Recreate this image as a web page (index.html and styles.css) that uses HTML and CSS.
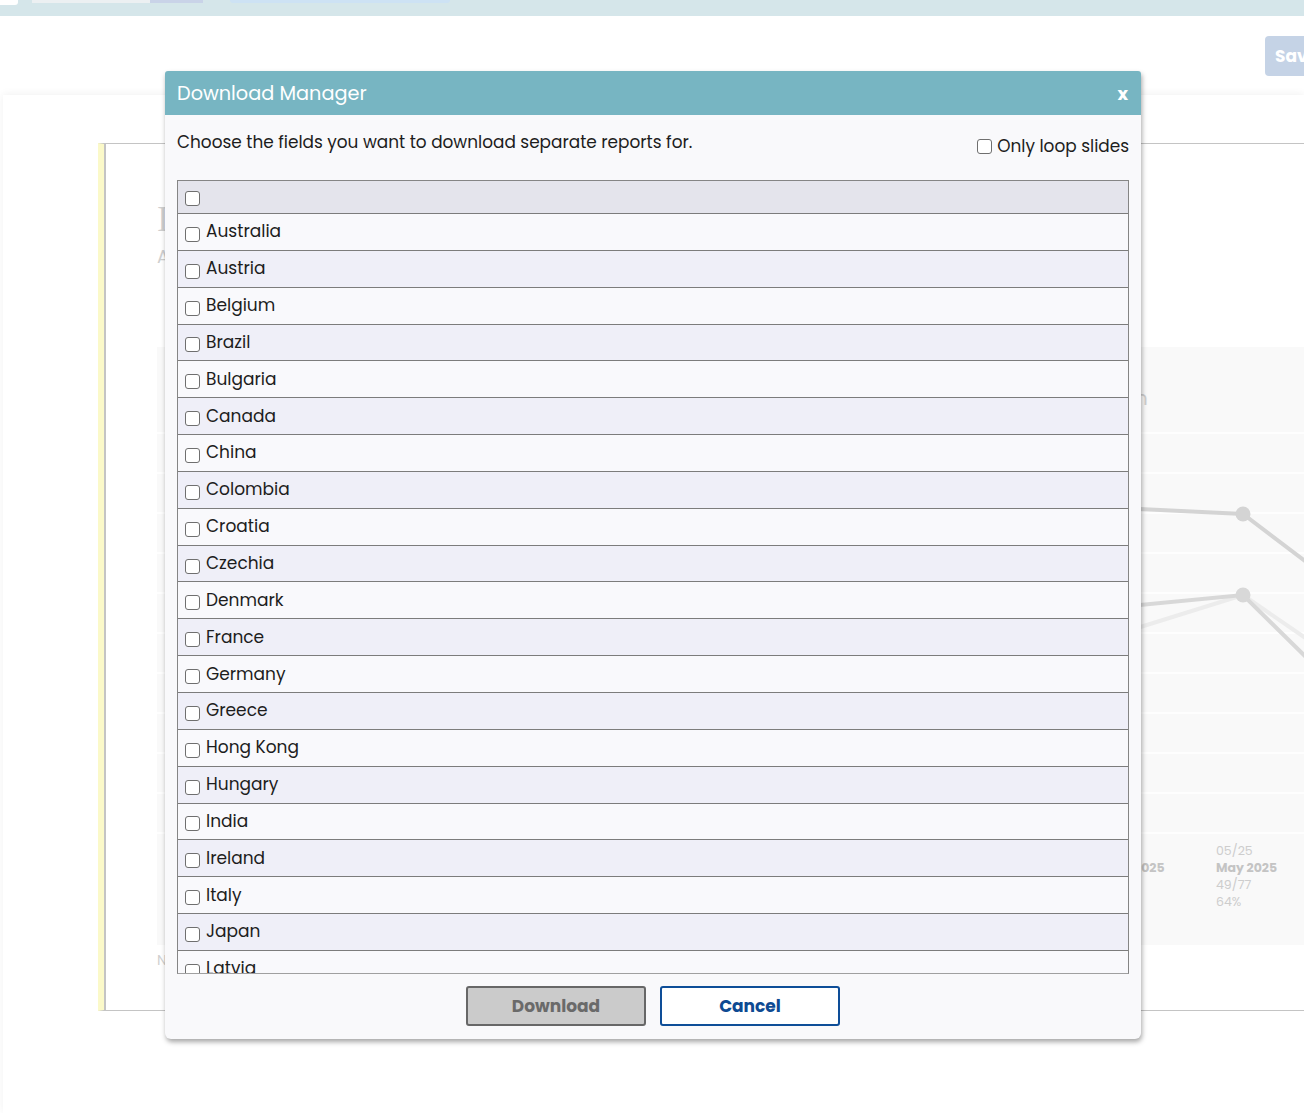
FILE: index.html
```html
<!DOCTYPE html>
<html>
<head>
    <title>Download Manager</title>
    <link rel="stylesheet" href="styles.css">
</head>
<body>
    <div class="topbar">
        <span class="tb-box tb-white"></span>
        <span class="tb-box tb-grey"></span>
        <span class="tb-box tb-lilac"></span>
        <span class="tb-box tb-pill"></span>
    </div>

    <div class="toolbar">
        <button class="save-btn">Save</button>
    </div>

    <div class="panel">
        <div class="card">
            <div class="card-title">I</div>
            <div class="card-sub">A</div>
            <div class="chart">
                <svg width="1160" height="598" viewBox="0 0 1160 598">
                    <rect x="0" y="0" width="1160" height="598" fill="#f9f9f9"/>
                    <g stroke="#ffffff" stroke-width="1.5">
                        <line x1="0" y1="86" x2="1160" y2="86"/>
                        <line x1="0" y1="126" x2="1160" y2="126"/>
                        <line x1="0" y1="166" x2="1160" y2="166"/>
                        <line x1="0" y1="206" x2="1160" y2="206"/>
                        <line x1="0" y1="246" x2="1160" y2="246"/>
                        <line x1="0" y1="286" x2="1160" y2="286"/>
                        <line x1="0" y1="326" x2="1160" y2="326"/>
                        <line x1="0" y1="366" x2="1160" y2="366"/>
                        <line x1="0" y1="406" x2="1160" y2="406"/>
                        <line x1="0" y1="446" x2="1160" y2="446"/>
                        <line x1="0" y1="486" x2="1160" y2="486"/>
                    </g>
                    <g fill="none" stroke-width="4" stroke-linecap="round">
                        <polyline points="900,306 1086,248 1160,299" stroke="#ececec"/>
                        <polyline points="900,158 1086,167 1160,223" stroke="#d4d4d4"/>
                        <polyline points="900,266 1086,248 1160,321" stroke="#d8d8d8"/>
                    </g>
                    <circle cx="1086" cy="167" r="7.5" fill="#d4d4d4"/>
                    <circle cx="1086" cy="248" r="7.5" fill="#d8d8d8"/>
                    <text x="978" y="58" class="ch-axis">n</text>
                    <text x="977" y="525" class="ch-bold">2025</text>
                    <text x="1059" y="508" class="ch-lbl">05/25</text>
                    <text x="1059" y="525" class="ch-bold">May 2025</text>
                    <text x="1059" y="542" class="ch-lbl">49/77</text>
                    <text x="1059" y="559" class="ch-lbl">64%</text>
                </svg>
            </div>
            <div class="card-note">N</div>
        </div>
    </div>

    <div class="modal">
        <div class="modal-header">
            <span class="modal-title">Download Manager</span>
            <span class="modal-close">x</span>
        </div>
        <div class="modal-body">
            <div class="intro">
                <p>Choose the fields you want to download separate reports for.</p>
                <label class="loop-opt"><input type="checkbox" class="cb"> Only loop slides</label>
            </div>
            <div class="field-list">
                <div class="field-row head"><input type="checkbox" class="cb"></div>
                <div class="field-row"><input type="checkbox" class="cb"><span>Australia</span></div>
                <div class="field-row"><input type="checkbox" class="cb"><span>Austria</span></div>
                <div class="field-row"><input type="checkbox" class="cb"><span>Belgium</span></div>
                <div class="field-row"><input type="checkbox" class="cb"><span>Brazil</span></div>
                <div class="field-row"><input type="checkbox" class="cb"><span>Bulgaria</span></div>
                <div class="field-row"><input type="checkbox" class="cb"><span>Canada</span></div>
                <div class="field-row"><input type="checkbox" class="cb"><span>China</span></div>
                <div class="field-row"><input type="checkbox" class="cb"><span>Colombia</span></div>
                <div class="field-row"><input type="checkbox" class="cb"><span>Croatia</span></div>
                <div class="field-row"><input type="checkbox" class="cb"><span>Czechia</span></div>
                <div class="field-row"><input type="checkbox" class="cb"><span>Denmark</span></div>
                <div class="field-row"><input type="checkbox" class="cb"><span>France</span></div>
                <div class="field-row"><input type="checkbox" class="cb"><span>Germany</span></div>
                <div class="field-row"><input type="checkbox" class="cb"><span>Greece</span></div>
                <div class="field-row"><input type="checkbox" class="cb"><span>Hong Kong</span></div>
                <div class="field-row"><input type="checkbox" class="cb"><span>Hungary</span></div>
                <div class="field-row"><input type="checkbox" class="cb"><span>India</span></div>
                <div class="field-row"><input type="checkbox" class="cb"><span>Ireland</span></div>
                <div class="field-row"><input type="checkbox" class="cb"><span>Italy</span></div>
                <div class="field-row"><input type="checkbox" class="cb"><span>Japan</span></div>
                <div class="field-row"><input type="checkbox" class="cb"><span>Latvia</span></div>
                <div class="field-row"><input type="checkbox" class="cb"><span>Lithuania</span></div>
            </div>
            <div class="actions">
                <button class="btn btn-download">Download</button>
                <button class="btn btn-cancel">Cancel</button>
            </div>
        </div>
    </div>
</body>
</html>
```

FILE: styles.css
```css
body {
    margin: 0;
    padding: 0;
    background-color: #fff;
    font-family: 'Poppins', 'Open Sans', Arial, sans-serif;
    overflow: hidden;
    height: 1113px;
    position: relative;
}

/* background page */
.topbar {
    height: 16px;
    background-color: #d5e6ea;
    display: flex;
    align-items: flex-start;
}

.tb-box {
    display: block;
    height: 4px;
}

.tb-white {
    width: 18px;
    height: 5px;
    background: #fff;
    border-radius: 0 0 3px 0;
}

.tb-grey {
    width: 118px;
    margin-left: 14px;
    height: 3px;
    background: #ecf0f2;
}

.tb-lilac {
    width: 53px;
    height: 3px;
    background: #c9d3e8;
}

.tb-pill {
    width: 220px;
    margin-left: 27px;
    height: 3px;
    background: #cde2f4;
    border-radius: 0 0 6px 6px;
}

.toolbar {
    height: 79px;
    display: flex;
    justify-content: flex-end;
    align-items: flex-start;
}

.save-btn {
    margin-top: 20px;
    margin-right: -40px;
    width: 79px;
    height: 40px;
    background-color: #c5d3e6;
    color: #fff;
    border: none;
    border-radius: 4px;
    font-family: inherit;
    font-weight: bold;
    font-size: 17px;
    text-align: left;
    padding-left: 10px;
}

.panel {
    margin-left: 3px;
    padding: 48px 0 0 95px;
    height: 1018px;
    box-sizing: border-box;
    background: #fff;
    box-shadow: 0 -1px 8px rgba(0, 0, 0, 0.06);
}

.card {
    width: 1260px;
    height: 868px;
    box-sizing: border-box;
    border: 1px solid #c4c4c4;
    border-left: 6px solid #fbf9c9;
    box-shadow: inset 2px 0 0 #c4c4c4;
    padding: 55px 0 0 53px;
    color: #cfcfcf;
}

.card-title {
    font-size: 36px;
    line-height: 40px;
    font-family: 'Liberation Serif', serif;
}

.card-sub {
    margin-top: 6px;
    font-size: 18px;
    line-height: 24px;
}

.chart {
    margin-top: 78px;
    height: 598px;
}

.chart svg {
    display: block;
}

.ch-axis {
    font-size: 20px;
    fill: #cfcfcf;
}

.ch-lbl {
    font-size: 12.5px;
    fill: #cdcdcd;
}

.ch-bold {
    font-size: 12.5px;
    font-weight: bold;
    fill: #c4c4c4;
}

.card-note {
    font-size: 14px;
    margin-top: 5px;
}

/* modal */
.modal {
    position: absolute;
    left: 165px;
    top: 71px;
    width: 976px;
    height: 968px;
    background-color: #f9f9fb;
    border-radius: 3px 3px 6px 6px;
    box-shadow: 1px 3px 5px rgba(0, 0, 0, 0.35);
    display: flex;
    flex-direction: column;
}

.modal-header {
    height: 44px;
    flex-shrink: 0;
    background-color: #77b5c2;
    border-radius: 3px 3px 0 0;
    color: #fff;
    display: flex;
    align-items: center;
    justify-content: space-between;
    padding: 0 12px;
}

.modal-title {
    font-size: 19.3px;
}

.modal-close {
    font-size: 18px;
    font-weight: bold;
    padding-right: 1px;
}

.modal-body {
    flex: 1;
    display: flex;
    flex-direction: column;
    padding: 12px 12px 13px 12px;
    min-height: 0;
}

.intro {
    display: flex;
    justify-content: space-between;
    align-items: flex-start;
    height: 53px;
    flex-shrink: 0;
    color: #1d1d1d;
    font-size: 16.9px;
}

.intro p {
    margin: 2px 0 0 0;
}

.loop-opt {
    margin-top: 6px;
    display: flex;
    align-items: center;
    gap: 5px;
}

.cb {
    appearance: none;
    -webkit-appearance: none;
    width: 15px;
    height: 15px;
    margin: 0;
    box-sizing: border-box;
    border: 1.3px solid #6f6f6f;
    border-radius: 3px;
    background: #fff;
    flex-shrink: 0;
}

.field-list {
    flex: 1;
    min-height: 0;
    overflow-y: auto;
    scrollbar-width: none;
    border: 1px solid #858585;
    border-bottom-color: #a0a0a0;
}

.field-row {
    height: 36.85px;
    box-sizing: border-box;
    border-bottom: 1px solid #7c7c7c;
    display: flex;
    align-items: center;
    padding-left: 7px;
    font-size: 17px;
    color: #1d1d1d;
    background-color: #f9f9fc;
}

.field-row:nth-child(odd) {
    background-color: #efeff8;
}

.field-row.head {
    height: 33px;
    background-color: #e4e4ec;
}

.field-row .cb {
    margin-top: 5px;
    margin-right: 6px;
}

.field-row span {
    margin-top: -1px;
}

.field-row.head .cb {
    margin-top: 3px;
}

.actions {
    flex-shrink: 0;
    display: flex;
    justify-content: center;
    gap: 14px;
    padding-top: 12px;
}

.btn {
    width: 180px;
    height: 40px;
    box-sizing: border-box;
    border-radius: 3px;
    font-family: inherit;
    font-size: 17px;
    font-weight: bold;
    cursor: pointer;
}

.btn-download {
    background-color: #cbcbcb;
    border: 2px solid #676767;
    color: #6a6a6a;
}

.btn-cancel {
    background-color: #fff;
    border: 2px solid #0e4e98;
    color: #0e4a92;
}
```
